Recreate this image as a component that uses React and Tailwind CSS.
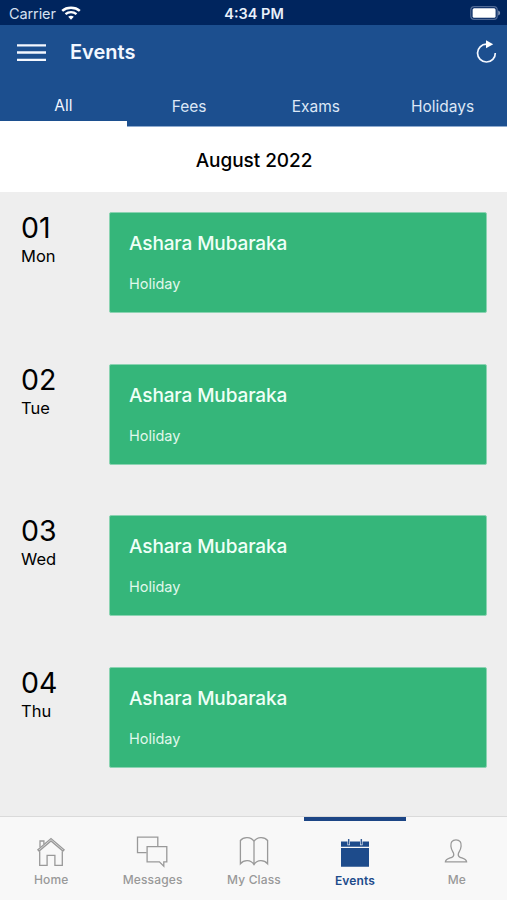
import React from "react";

const tabs = ["All", "Fees", "Exams", "Holidays"];

const events = [
  { day: "01", weekday: "Mon" },
  { day: "02", weekday: "Tue" },
  { day: "03", weekday: "Wed" },
  { day: "04", weekday: "Thu" },
];

function StatusBar() {
  return (
    <div className="flex h-[25px] items-center bg-[#00255e] text-[#e8f0fb]">
      <div className="flex flex-1 items-center gap-[5px] pl-[9px]">
        <span className="pt-[2px] text-[14.5px] leading-[20px] tracking-[-0.1px] text-[#d5e0f0]">Carrier</span>
        <svg className="h-[14px] w-[20px]" viewBox="0 0 20 14" fill="none">
          <path d="M1.2 4.9C5.8.7 14.2.7 18.8 4.9" stroke="#fff" strokeWidth="2.5" />
          <path d="M4.5 8.2c3.2-2.8 7.8-2.8 11 0" stroke="#fff" strokeWidth="2.3" />
          <path d="M7.2 10.8c1.7-1.4 3.9-1.4 5.6 0L10 13.8z" fill="#fff" />
        </svg>
      </div>
      <span className="pt-[2px] text-[14.5px] font-semibold leading-[20px]">4:34 PM</span>
      <div className="flex flex-1 justify-end pl-[2px] pr-[6px]">
        <svg className="mt-[1px] h-[14px] w-[31px]" viewBox="0 0 31 14" fill="none">
          <rect x=".8" y=".6" width="26.4" height="12.8" rx="3.4" stroke="#506a96" strokeWidth="1.2" />
          <rect x="2.6" y="2.2" width="23" height="9.6" rx="1.5" fill="#fff" />
          <path d="M28.2 4.5c2.6 1 2.6 4 0 5z" fill="#8194b4" />
        </svg>
      </div>
    </div>
  );
}

function Header() {
  return (
    <header className="bg-[#1c4f8f] text-[#f2f7ff]">
      <div className="flex h-[55px] items-center pb-[2px] pl-[17px] pr-[10px]">
        <svg className="mt-[2px] h-[20px] w-[29px]" viewBox="0 0 29 20" fill="none" stroke="#f4f8ff" strokeWidth="2.3">
          <path d="M0 2.3h29M0 9.5h29M0 16.8h29" />
        </svg>
        <h1 className="ml-[24px] flex-1 text-[20px] font-semibold leading-[28px]">Events</h1>
        <svg className="h-[24px] w-[22px]" viewBox="0 0 22 24" fill="none">
          <path d="M11.5 4.2A8.9 8.9 0 1 0 20.3 12.9" stroke="#f4f8ff" strokeWidth="1.7" />
          <path d="M11 .3 18.2 4.3 11 8.3z" fill="#fff" />
        </svg>
      </div>
      <div className="flex h-[47px]">
        {tabs.map((tab, i) => (
          <div
            key={tab}
            className={
              i === 0
                ? "w-1/4 border-b-[6px] border-white pt-[15.5px] text-center text-[15.5px] leading-[20px]"
                : "w-1/4 border-b border-[#8fabcf] pr-[2px] pt-[17px] text-center text-[15.5px] leading-[20px] text-[#dce7f6]"
            }
          >
            {tab}
          </div>
        ))}
      </div>
    </header>
  );
}

function EventRow({ day, weekday }) {
  return (
    <div className="flex h-[101px]">
      <div className="w-[88px] shrink-0 text-black">
        <div className="text-[28.5px] leading-[32px]">{day}</div>
        <div className="pt-[2px] text-[16.5px] leading-[20px]">{weekday}</div>
      </div>
      <div className="flex-1 rounded-[2px] border border-[#8bd3b2] bg-[#35b67a] pl-[19px] text-[#effff7]">
        <div className="pt-[17px] text-[19px] font-medium leading-[28px] tracking-[-0.12px]">Ashara Mubaraka</div>
        <div className="pt-[16px] text-[14.5px] leading-[20px] text-[#e0f8ec]">Holiday</div>
      </div>
    </div>
  );
}

function NavItem({ label, active, children }) {
  return (
    <div
      className={
        active
          ? "flex h-[83px] flex-1 flex-col items-center border-t-4 border-[#1c4585] pt-[13px] text-[#1d4b8b]"
          : "flex h-[83px] flex-1 flex-col items-center pt-[17px] text-[#999999]"
      }
    >
      <svg
        className="h-[36px] w-[36px]"
        viewBox="0 0 36 36"
        fill="none"
        stroke="currentColor"
        strokeWidth="1.3"
      >
        {children}
      </svg>
      <span
        className={
          active
            ? "pt-[3px] text-[12px] font-semibold leading-[16px] tracking-[0.1px]"
            : "pl-[1px] pt-[2px] text-[12px] font-medium leading-[16px] tracking-[0.15px]"
        }
      >
        {label}
      </span>
    </div>
  );
}

function BottomNav() {
  return (
    <nav className="flex h-[84px] border-t border-[#dadada] bg-[#f8f8f8]">
      <NavItem label="Home">
        <path d="M4.9 15.7 18 4.5l13.1 11.2-1.2 1.3L18 6.9 6.1 17z" />
        <path d="M7 13.3V7h3.9v3M6.7 17.2v14.1h7.4V21.3h7.8v10h7.4V17.2" />
      </NavItem>
      <NavItem label="Messages">
        <path d="M12.6 18.7H3.5V3.2h20.3v9" />
        <path d="M13.1 12.7h19.7v15.2h-3v4.4l-4.4-4.4H13.1z" />
      </NavItem>
      <NavItem label="My Class">
        <path d="M18 7.3c-3-4.7-10.4-4.9-13.6-.8v23.2c3.7-4.1 10.4-4.2 13.6.9 3.2-5.1 9.9-5 13.6-.9V6.5C28.4 2.4 21 2.6 18 7.3v23.3" />
      </NavItem>
      <NavItem label="Events" active>
        <path d="M4 7.5h28v5.2H4zM4 14h28v18.8H4z" fill="currentColor" stroke="none" />
        <path d="M11.7 5.3v6M24.3 5.3v6" stroke="#dfe7f2" strokeWidth="2.6" />
        <path d="M11.7 5v5.5M24.3 5v5.5" strokeWidth="1.2" />
      </NavItem>
      <NavItem label="Me">
        <path d="M18 5.9c-3.9 0-5.5 2.7-5.1 6.3.4 3.8 1.6 5 2.4 6.4.9 2.3.5 3.9-1.4 4.7-3 1.2-6.4 1.7-6.5 4.5h21.2c-.1-2.8-3.5-3.3-6.5-4.5-1.9-.8-2.3-2.4-1.4-4.7.8-1.4 2-2.6 2.4-6.4.4-3.6-1.2-6.3-5.1-6.3z" />
      </NavItem>
    </nav>
  );
}

export default function App() {
  return (
    <div className="flex h-[900px] w-[507px] flex-col overflow-hidden bg-[#eeeeee] font-['Inter','Liberation_Sans',sans-serif]">
      <StatusBar />
      <Header />
      <div className="flex h-[65px] items-center justify-center bg-white pl-[1px] pt-[4px] text-[19px] font-medium tracking-[-0.05px] text-black">
        August 2022
      </div>
      <main className="flex flex-1 flex-col gap-[50.6px] pl-[21px] pr-[20px] pt-[20px]">
        {events.map((event) => (
          <EventRow key={event.day} day={event.day} weekday={event.weekday} />
        ))}
      </main>
      <BottomNav />
    </div>
  );
}
